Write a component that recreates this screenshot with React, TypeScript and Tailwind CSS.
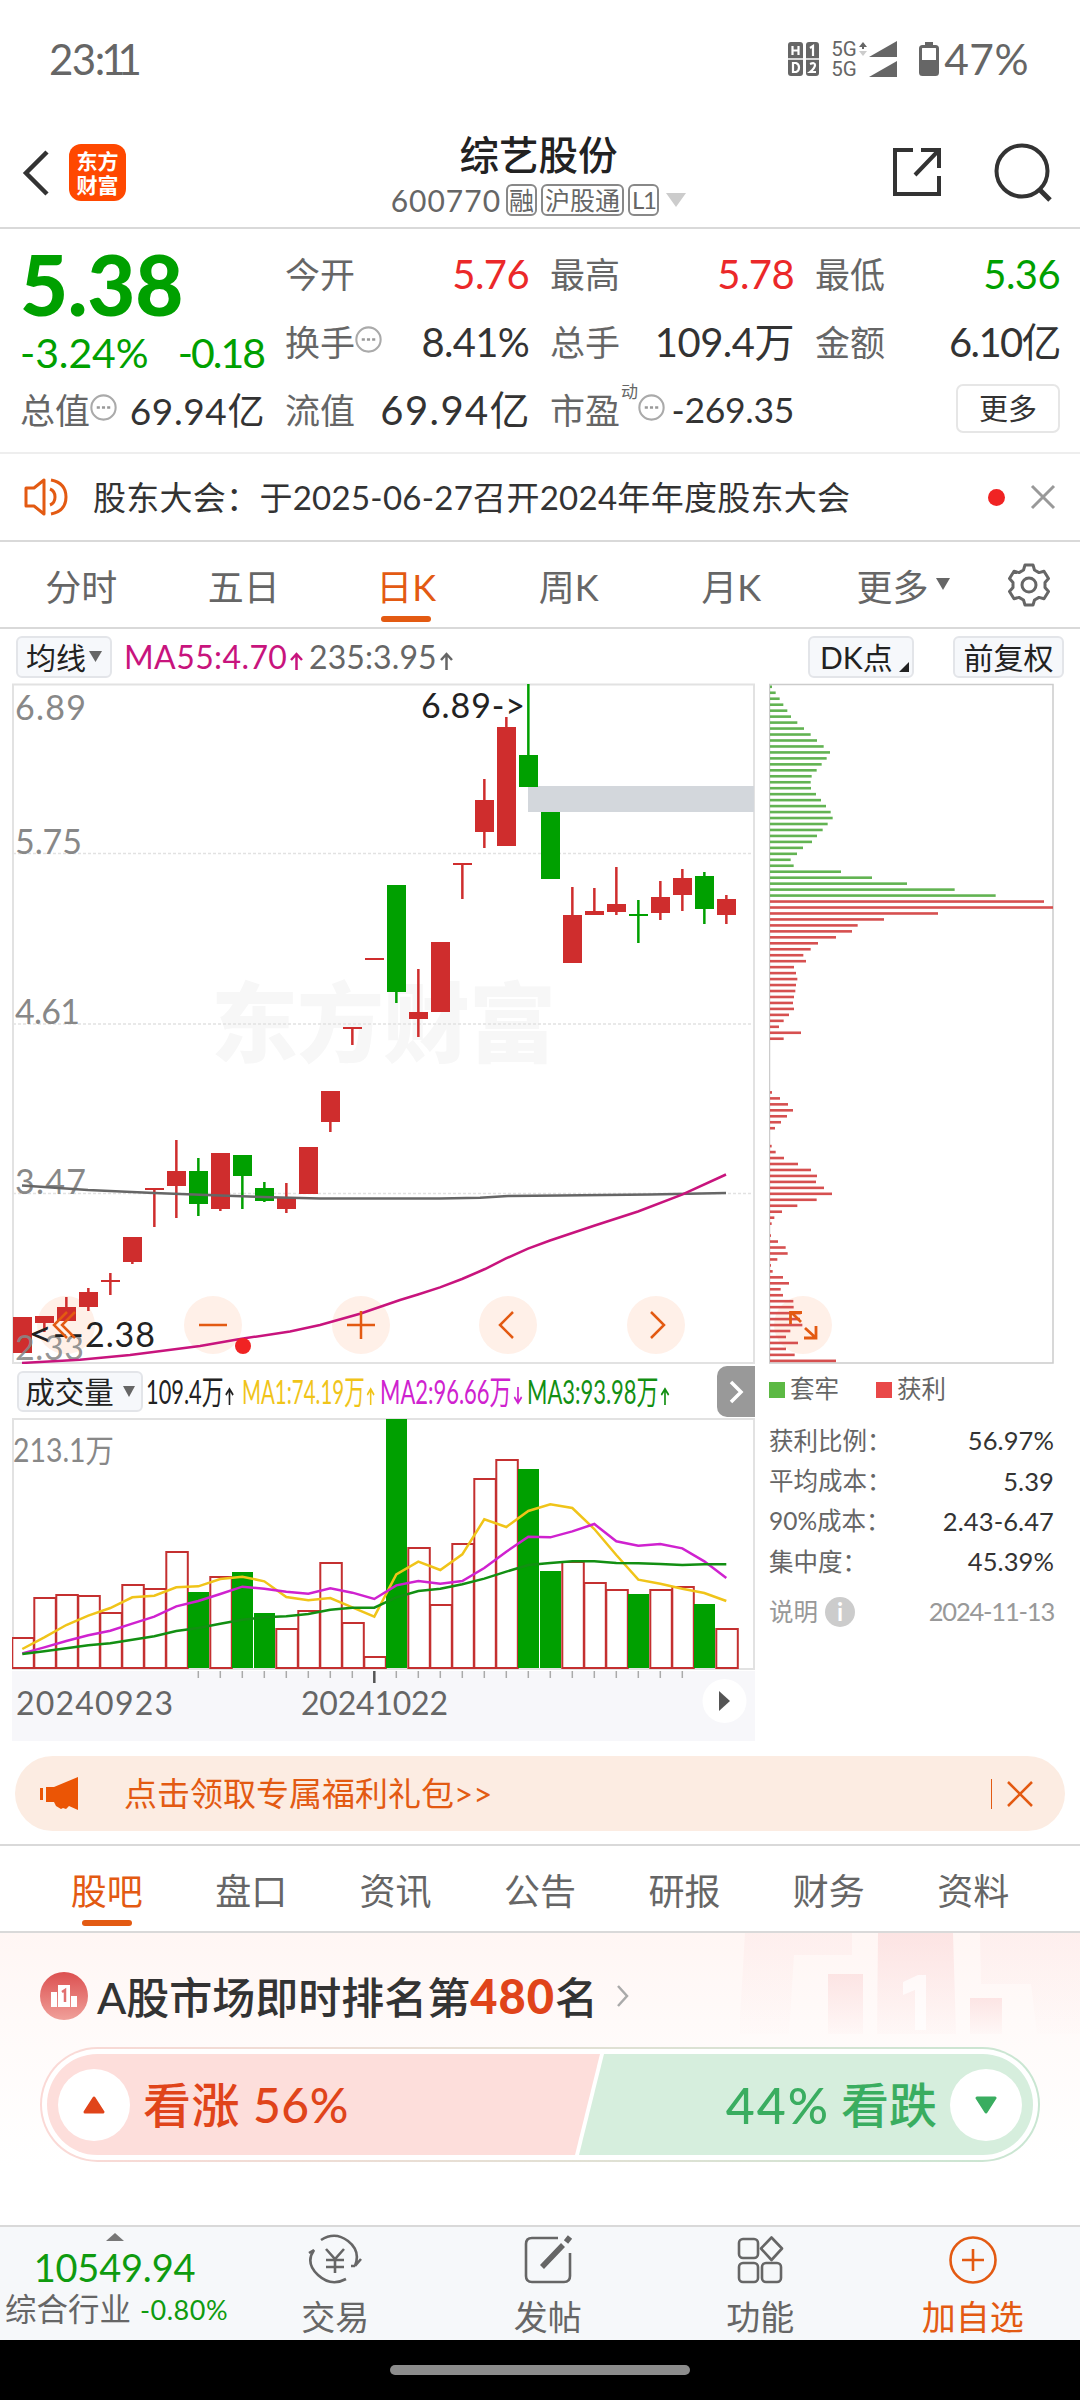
import clsx from "clsx";

type TCandle = {
  up: boolean
  high: number
  top: number
  bottom: number
  low: number
}

const c = (up: number, high: number, top: number, bottom: number, low: number): TCandle => ({
  up: up === 1,
  high,
  top,
  bottom,
  low,
});

const candles: TCandle[] = [
  c(1, 1317, 1317, 1353, 1353),
  c(1, 1316, 1316, 1323, 1332),
  c(1, 1297, 1307, 1321, 1321),
  c(1, 1288, 1292, 1307, 1311),
  c(1, 1273, 1280, 1282, 1295),
  c(1, 1237, 1237, 1262, 1264),
  c(1, 1188, 1188, 1190, 1227),
  c(1, 1140, 1171, 1186, 1218),
  c(0, 1158, 1171, 1204, 1216),
  c(1, 1153, 1153, 1209, 1211),
  c(0, 1155, 1155, 1176, 1209),
  c(0, 1182, 1188, 1201, 1202),
  c(1, 1183, 1198, 1209, 1213),
  c(1, 1147, 1147, 1194, 1194),
  c(1, 1091, 1091, 1122, 1132),
  c(1, 1027, 1027, 1029, 1045),
  c(1, 958, 958, 960, 960),
  c(0, 885, 885, 992, 1003),
  c(1, 969, 1012, 1019, 1037),
  c(1, 942, 942, 1012, 1012),
  c(1, 863, 863, 865, 899),
  c(1, 779, 800, 832, 848),
  c(1, 717, 727, 846, 846),
  c(0, 684, 755, 787, 787),
  c(0, 812, 812, 879, 879),
  c(1, 887, 915, 963, 963),
  c(1, 888, 911, 915, 915),
  c(1, 867, 904, 912, 915),
  c(0, 900, 914, 916, 943),
  c(1, 881, 897, 913, 920),
  c(1, 869, 878, 895, 911),
  c(0, 872, 876, 909, 924),
  c(1, 895, 899, 915, 924),
];

const volumes = [
  30, 70, 73, 72, 55, 83, 79, 116, 76, 91, 96, 55, 39, 57, 105, 45, 11, 249, 120, 63, 124, 189,
  208, 199, 97, 106, 85, 78, 74, 78, 81, 64, 39,
];

// distance from the bottom of the volume pane, in thirds of a pixel
const volumeLines = [
  {
    color: "#f0c419",
    points: [
      57, 92, 129, 157, 180, 212, 217, 242, 245, 267, 274, 260, 213, 203, 210, 182, 154, 281, 319,
      294, 341, 446, 423, 471, 491, 480, 417, 339, 265, 253, 238, 225, 201,
    ],
  },
  {
    color: "#cf22cf",
    points: [
      44, 62, 81, 98, 112, 133, 154, 185, 201, 222, 244, 238, 229, 223, 239, 226, 207, 248, 261,
      253, 261, 300, 349, 394, 392, 410, 432, 380, 367, 372, 359, 320, 270,
    ],
  },
  {
    color: "#128f12",
    points: [
      42, 50, 59, 68, 74, 85, 95, 111, 120, 133, 145, 152, 155, 162, 175, 181, 181, 212, 231, 238,
      251, 268, 289, 309, 315, 320, 320, 315, 314, 312, 309, 311, 311,
    ],
  },
];

// cost distribution, one entry per price row; the first 36 rows are above the last price
const chips = [
  6, 17, 29, 40, 52, 63, 82, 102, 122, 141, 161, 180, 170, 155, 140, 125, 122, 123, 138, 153, 168,
  182, 188, 173, 158, 141, 126, 99, 81, 62, 71, 213, 306, 411, 554, 677, 822, 849, 504, 342, 263,
  246, 198, 144, 122, 100, 108, 72, 78, 82, 78, 76, 72, 69, 72, 57, 41, 27, 93, 41, 0, 0, 0, 0, 0,
  0, 0, 0, 6, 30, 54, 69, 51, 33, 15, 0, 0, 5, 17, 42, 84, 123, 141, 138, 162, 186, 140, 82, 36,
  13, 5, 0, 3, 24, 47, 53, 22, 3, 8, 39, 57, 32, 39, 70, 71, 92, 90, 97, 61, 48, 84, 48, 74, 198,
];

const cx = (i: number) => 22.3 + i * 22;

function StatusBar() {
  return (
    <div className="flex h-[118px] items-center justify-between pl-[49px] pr-[51px] text-[#666]">
      <span className="text-[42px] leading-none tracking-[-1.5px]">
        23<span className="tracking-[-4px]">:</span>
        <span className="tracking-[-8px]">11</span>
      </span>
      <div className="flex items-center">
        <svg width="32" height="36" viewBox="0 0 32 36">
          <rect x="0" y="1" width="15" height="34" rx="3" fill="#666" />
          <rect x="18" y="1" width="13" height="34" rx="3" fill="#666" />
          <path d="M4.500 5v9M10.500 5v9M4.500 9.500h6M5 22v9h3q3-1 3-4.500t-3-4.500z" stroke="#fff" strokeWidth="2.200" fill="none" />
          <path d="M22 7l3-2v10M22 23q5-2 5 1t-5 7h6" stroke="#fff" strokeWidth="2.200" fill="none" />
          <path d="M0 18h32" stroke="#fff" strokeWidth="1.500" />
        </svg>
        <div className="ml-[11px] flex w-[27px] flex-col gap-[2px] font-['Roboto',sans-serif] text-[20.500px] leading-[18px]">
          <span>5G</span>
          <span>5G</span>
        </div>
        <svg className="ml-px" width="40" height="38" viewBox="0 0 40 38">
          <path d="M4 2l4 5H0zM3 6h2v3H3z" fill="#666" />
          <path d="M4 16l4-5H0z" fill="#ccc" />
          <path d="M38 1v16H10zM38 21v16H10z" fill="#666" />
        </svg>
        <svg className="ml-[20px]" width="20" height="34" viewBox="0 0 20 34">
          <path d="M6 0h8v4H6z" fill="#666" />
          <rect x="1.500" y="4.500" width="17" height="28" rx="2" fill="none" stroke="#666" strokeWidth="3" />
          <path d="M2 18h16v14H2z" fill="#666" />
        </svg>
        <span className="ml-[5px] text-[42.500px] leading-none tracking-[0.5px]">47%</span>
      </div>
    </div>
  );
}

function Header() {
  return (
    <div className="flex h-[111px] items-center justify-between border-b-2 border-[#d9d9d9] pl-[21px] pr-[27px]">
      <div className="flex w-[320px] items-center">
        <svg width="30" height="48" viewBox="0 0 30 48" fill="none" stroke="#333" strokeWidth="4.500">
          <path d="M26 3L5 24l21 21" />
        </svg>
        <div className="ml-[18px] flex h-[57px] w-[57px] flex-col items-center justify-center rounded-[12px] bg-[#ff4800] text-[21px] font-bold leading-[24px] text-white">
          <span>东方</span>
          <span>财富</span>
        </div>
      </div>
      <div className="ml-[3px] flex flex-col items-center">
        <div className="text-[39.5px] font-medium leading-[52px] text-[#222]">综艺股份</div>
        <div className="mt-[3px] flex h-[33px] items-center gap-[4px] text-[25px] leading-none text-[#666]">
          <span className="mr-px text-[30px] tracking-[1px]">600770</span>
          <span className="flex h-[32px] items-center rounded-[6px] border-2 border-[#888] px-px">融</span>
          <span className="flex h-[32px] items-center rounded-[6px] border-2 border-[#888] px-[2px]">沪股通</span>
          <span className="flex h-[32px] items-center rounded-[6px] border-2 border-[#888] px-[2px] text-[24px] tracking-[-1.5px]">L1</span>
          <svg className="ml-[3px]" width="20" height="14" viewBox="0 0 20 14">
            <path d="M0 0h20L10 14z" fill="#ccc" />
          </svg>
        </div>
      </div>
      <div className="flex w-[320px] items-center justify-end gap-[51px]">
        <svg className="mb-[2px]" width="50" height="50" viewBox="0 0 50 50" fill="none" stroke="#333" strokeWidth="4" >
          <path d="M21 3H3v44h44V29M29 3h18v18M47 3L23 28" />
        </svg>
        <svg className="mb-[2px]" width="60" height="60" viewBox="0 0 60 60" fill="none" stroke="#333" strokeWidth="4">
          <circle cx="29" cy="29" r="25.500" />
          <path d="M46 47l11 11" strokeWidth="5" />
        </svg>
      </div>
    </div>
  );
}

function Dots() {
  return (
    <svg className="mb-[5px] shrink-0" width="27" height="27" viewBox="0 0 26 26">
      <circle cx="13" cy="13" r="11.700" fill="none" stroke="#aaa" strokeWidth="2" />
      <path d="M6.500 11.800h3v2.400h-3zM11.500 11.800h3v2.400h-3zM16.500 11.800h3v2.400h-3z" fill="#999" />
    </svg>
  );
}

type TField = {
  label: string
  value: string
  color?: string
  dots?: boolean
  size?: string
}

function Field({ label, value, color = "text-[#333]", dots, size = "text-[40px] tracking-[-0.7px]" }: TField) {
  return (
    <div className="flex h-[68px] items-center justify-between">
      <div className="flex items-center text-[35px] text-[#666]">
        {label}
        {dots && <Dots />}
      </div>
      <span className={clsx("whitespace-nowrap", size, color)}>{value}</span>
    </div>
  );
}

function Quote() {
  return (
    <div className="flex h-[225px] border-b-2 border-[#eee] pl-[20px] pr-[20px] pt-[11px] leading-none">
      <div className="w-[244px]">
        <div className="flex h-[89px] items-center text-[83px] font-black tracking-[-0.3px] text-[#00a000]">
          5.38
        </div>
        <div className="flex h-[47px] items-center justify-between text-[41px] tracking-[-0.1px] text-[#00a000]">
          <span>-3.24%</span>
          <span className="tracking-[-2px]">-0.18</span>
        </div>
        <Field label="总值" value="69.94亿" dots size="text-[37px] tracking-[0.6px] -mr-px" />
      </div>
      <div className="ml-[21px] w-[244px]">
        <Field label="今开" value="5.76" color="text-[#eb2829]" size="text-[40px] tracking-[-0.6px]" />
        <Field label="换手" value="8.41%" dots />
        <Field label="流值" value="69.94亿" size="text-[40px] tracking-[1.4px] -mr-[2px]" />
      </div>
      <div className="ml-[21px] w-[244px]">
        <Field label="最高" value="5.78" color="text-[#eb2829]" size="text-[40px] tracking-[-0.6px]" />
        <Field label="总手" value="109.4万" size="text-[40px] tracking-[-0.5px]" />
        <div className="flex h-[68px] items-center justify-between">
          <div className="flex items-center text-[35px] text-[#666]">
            市盈
            <span className="mb-[38px] ml-px text-[17px]">动</span>
            <Dots />
          </div>
          <span className="text-[35.5px] tracking-[-0.3px] text-[#333]">-269.35</span>
        </div>
      </div>
      <div className="ml-[21px] w-[245px]">
        <Field label="最低" value="5.36" color="text-[#00a000]" size="text-[40px] tracking-[-0.6px]" />
        <Field label="金额" value="6.10亿" size="text-[40px] tracking-[-1.6px]" />
        <div className="flex h-[68px] items-center justify-end">
          <span className="mb-[3px] flex h-[49px] w-[104px] items-center justify-center rounded-[7px] border-2 border-[#e6e6e6] text-[29px] text-[#333]">
            更多
          </span>
        </div>
      </div>
    </div>
  );
}

function Notice() {
  return (
    <div className="flex h-[88px] items-center border-b-2 border-[#d9d9d9] pl-[24px] pr-[24px]">
      <svg width="46" height="40" viewBox="0 0 46 40" fill="none" stroke="#e35a12" strokeWidth="3">
        <path d="M2 11h8L20 3v34L10 29H2z" strokeLinejoin="round" />
        <path d="M26 12q5 2 5 8t-5 8M27 3q15 3 15 17T27 37" />
      </svg>
      <span className="ml-[23px] whitespace-nowrap text-[33px] leading-none tracking-[0.280px] text-[#333]">
        股东大会：于2025-06-27召开2024年年度股东大会
      </span>
      <span className="ml-auto h-[17px] w-[17px] rounded-full bg-[#f02323]" />
      <svg className="ml-[25px]" width="26" height="26" viewBox="0 0 26 26" stroke="#999" strokeWidth="3">
        <path d="M2 2l22 22M24 2L2 24" />
      </svg>
    </div>
  );
}

function PeriodTabs() {
  const tabs = ["分时", "五日", "日K", "周K", "月K"];
  return (
    <div className="flex h-[87px] border-b-2 border-[#d9d9d9] text-[36px] leading-none text-[#666]">
      {tabs.map((tab) => (
        <div
          key={tab}
          className={clsx("flex w-[162.500px] flex-col items-center pt-[27px]", tab === "日K" && "text-[#e35a12]")}
        >
          {tab}
          {tab === "日K" && <span className="mt-[11px] h-[6px] w-[50px] rounded-full bg-[#e35a12]" />}
        </div>
      ))}
      <div className="flex w-[181px] items-start justify-center gap-[7px] pt-[27px]">
        更多
        <svg className="mt-[9px]" width="14" height="12" viewBox="0 0 14 12">
          <path d="M0 0h14L7 12z" fill="#666" />
        </svg>
      </div>
      <svg className="ml-[13px] mt-[21px]" width="44" height="44" viewBox="0 0 44 44" fill="none" stroke="#666" strokeWidth="3">
        <path
          d="M18 2h8l1.500 5 4.500 2.600 5-1.400 4.500 7.300-3.500 4v5l3.500 4-4.500 7.300-5-1.400-4.500 2.600L26 42h-8l-1.500-5-4.500-2.600-5 1.400-4.500-7.300 3.500-4v-5l-3.500-4L7 8.200l5 1.400L16.500 7z"
          strokeLinejoin="round"
        />
        <circle cx="22" cy="22" r="7" />
      </svg>
    </div>
  );
}

function AverageBar() {
  return (
    <div className="flex h-[54px] items-center pl-[16px] pr-[16px] pt-px text-[30px] leading-none">
      <span className="flex h-[42px] w-[96px] items-center justify-center gap-[3px] rounded-[6px] border-2 border-[#e3e5e9] bg-[#f6f8fb] text-[#222]">
        均线
        <svg width="13" height="11" viewBox="0 0 13 11">
          <path d="M0 0h13L6.500 11z" fill="#666" />
        </svg>
      </span>
      <span className="ml-[12px] w-[185px] whitespace-nowrap text-[32px] tracking-[0.4px] text-[#c8147d]">
        MA55:4.70<Arrow up />
      </span>
      <span className="whitespace-nowrap text-[32px] tracking-[0.1px] text-[#666]">
        235:3.95<Arrow up />
      </span>
      <span className="relative ml-auto flex h-[42px] w-[106px] items-center rounded-[6px] border-2 border-[#e3e5e9] bg-[#f6f8fb] pl-[10px] text-[#222]">
        DK点
        <svg className="absolute bottom-[4px] right-[3px]" width="10" height="10" viewBox="0 0 10 10">
          <path d="M10 0v10H0z" fill="#222" />
        </svg>
      </span>
      <span className="ml-[39px] flex h-[42px] w-[111px] items-center justify-center rounded-[6px] border-2 border-[#e3e5e9] bg-[#f6f8fb] text-[#222]">
        前复权
      </span>
    </div>
  );
}

function Arrow({ up }: { up?: boolean }) {
  return (
    <svg className="ml-[2px] inline-block align-[-1px]" width="15" height="18" viewBox="0 0 15 18" fill="none" stroke="currentColor" strokeWidth="2.500">
      <path d={up ? "M7.500 18V2M2 8l5.500-6L13 8" : "M7.500 0v16M2 10l5.500 6 5.500-6"} />
    </svg>
  );
}

function CandleChart() {
  return (
    <svg className="block" width="743" height="681" viewBox="12 683 743 681" fontSize="34">
      <text x="211" y="1056" fontSize="87" fontWeight="900" textLength="345" fill="#f7f7f7">
        东方财富
      </text>
      {[853.5, 1024, 1193.5].map((y) => (
        <path key={y} d={`M13 ${y}H754`} stroke="#e2e2e2" strokeWidth="1.500" strokeDasharray="3 2" />
      ))}
      <rect x="13" y="684.500" width="741" height="678.500" fill="none" stroke="#e2e2e2" strokeWidth="2" />
      <g fill="#fff0e8">
        {[66, 213, 361, 508, 656].map((x) => (
          <circle key={x} cx={x} cy="1325" r="29" />
        ))}
      </g>
      <g fill="#888">
        <text x="15" y="719.500" textLength="71">6.89</text>
        <text x="15" y="853.500" textLength="67">5.75</text>
        <text x="15" y="1023.500" textLength="65">4.61</text>
        <text x="15" y="1193.500" textLength="71">3.47</text>
      </g>
      <rect x="528" y="786" width="226" height="26" fill="#d3d7dc" />
      {candles.map((k, i) => (
        <g key={i} fill={k.up ? "#cf2d2d" : "#00a000"}>
          <rect x={cx(i) - 1.2} y={k.high} width="2.500" height={k.low - k.high} />
          <rect x={cx(i) - 9.3} y={k.top} width="19" height={k.bottom - k.top} />
        </g>
      ))}
      <text x="15" y="1360" fill="#888" fillOpacity="0.9" textLength="69">2.33</text>
      <g fill="none" strokeWidth="2.500">
        <path
          d="M22 1185.500L88 1190L154 1193L220 1195.500L280 1197.500L320 1198.600H440L480 1197.700L508 1196L560 1195.400L650 1194.600L726 1193"
          stroke="#666"
        />
        <path
          d="M22 1363L80 1359.700L130 1355L200 1346L240 1339L290 1331.500L320 1325L360 1313.800L400 1300L418 1294.500L440 1287.400L462 1279L485 1269L506 1258.400L528 1248.600L550 1240.500L594 1225.800L638 1211.500L682 1194.600L726 1174.500"
          stroke="#c8147d"
        />
      </g>
      <g fill="#222">
        <text x="421" y="717.500" textLength="104">6.89-&gt;</text>
        <text x="28" y="1346" textLength="56" lengthAdjust="spacingAndGlyphs">&lt;--</text>
        <text x="85" y="1346.500" textLength="70">2.38</text>
      </g>
      <circle cx="243" cy="1346" r="8" fill="#f02323" />
      <g fill="none" stroke="#e35a12" strokeWidth="2.500">
        <path d="M67 1312l-13 13 13 13M75 1312l-13 13 13 13" />
        <path d="M199 1325h28M347 1325h28M361 1311v28" />
        <path d="M513 1312l-13 13 13 13M651 1312l13 13-13 13" />
      </g>
    </svg>
  );
}

function VolumeBar() {
  return (
    <div className="flex h-[54px] items-center pl-[5px] pt-px text-[28px] leading-none">
      <span className="flex h-[41px] w-[126px] shrink-0 items-center justify-center gap-[9px] rounded-[6px] border-2 border-[#e3e5e9] bg-[#f6f8fb] text-[29.500px] text-[#222]">
        成交量
        <svg width="12" height="11" viewBox="0 0 12 11">
          <path d="M0 0h12L6 11z" fill="#666" />
        </svg>
      </span>
      <div className="ml-[3px] flex w-[570px] whitespace-nowrap text-[33px]">
        <div className="w-[96px]">
          <div className="origin-left scale-x-[0.660] text-[#222]">109.4万<Arrow up /></div>
        </div>
        <div className="w-[138px]">
          <div className="origin-left scale-x-[0.620] text-[#f0c419]">MA1:74.19万<Arrow up /></div>
        </div>
        <div className="w-[147px]">
          <div className="origin-left scale-x-[0.665] text-[#cf22cf]">MA2:96.66万<Arrow /></div>
        </div>
        <div className="w-[150px]">
          <div className="origin-left scale-x-[0.665] text-[#128f12]">MA3:93.98万<Arrow up /></div>
        </div>
      </div>
      <span className="ml-auto flex h-[51px] w-[38px] shrink-0 items-center justify-center rounded-l-[10px] bg-[#999]">
        <svg width="16" height="24" viewBox="0 0 16 24" fill="none" stroke="#fff" strokeWidth="3.500">
          <path d="M3 2l10 10L3 22" />
        </svg>
      </span>
    </div>
  );
}

function VolumeChart() {
  return (
    <svg className="block" width="743" height="323" viewBox="12 1418 743 323">
      <rect x="12" y="1671" width="743" height="70" fill="#f7f7fa" />
      <rect x="13" y="1419" width="741" height="250" fill="none" stroke="#e2e2e2" strokeWidth="2" />
      <text x="13" y="1462" fontSize="32" fill="#888" textLength="101" lengthAdjust="spacingAndGlyphs">213.1万</text>
      {volumes.map((v, i) =>
        candles[i].up ? (
          <rect key={i} x={cx(i) - 10} y={1668 - v} width="21.500" height={v} fill="#fff" stroke="#c43030" strokeWidth="2" />
        ) : (
          <rect key={i} x={cx(i) - 10.3} y={1668 - v} width="21" height={v} fill="#00a000" />
        ),
      )}
      {volumeLines.map((line) => (
        <polyline
          key={line.color}
          points={line.points.map((p, i) => `${cx(i)},${1668 - p / 3}`).join(" ")}
          fill="none"
          stroke={line.color}
          strokeWidth="2.500"
        />
      ))}
      {Array.from({ length: 23 }, (_, n) => n + 8).map((i) => (
        <path
          key={i}
          d={i === 16 ? `M${cx(i)} 1671v12` : `M${cx(i)} 1671v7`}
          stroke={i === 16 ? "#555" : "#aaa"}
          strokeWidth={i === 16 ? 2.5 : 1.5}
        />
      ))}
      <g fontSize="32" fill="#666">
        <text x="16" y="1715" textLength="157">20240923</text>
        <text x="301" y="1715" textLength="147">20241022</text>
      </g>
      <circle cx="724.500" cy="1701" r="22" fill="#fff" />
      <path d="M719 1691v20l11-10z" fill="#555" />
    </svg>
  );
}

function ChipPanel() {
  const rows = [
    ["获利比例：", "56.97%"],
    ["平均成本：", "5.39"],
    ["90%成本：", "2.43-6.47"],
    ["集中度：", "45.39%"],
  ];
  return (
    <div className="ml-[14px] w-[285px] text-[24.500px] leading-none">
      <svg className="block" width="285" height="681" viewBox="769 683 285 681">
        <path d="M769.500 684.500h283.500v678.500H769.500z" fill="none" stroke="#ccc" strokeWidth="1.500" />
        <circle cx="803" cy="1325" r="29" fill="#fff0e8" />
        {chips.map((w, i) => (
          <rect key={i} x="770" y={685.5 + i * 5.965} width={w / 3} height="2.600" fill={i < 36 ? "#62b352" : "#d65050"} />
        ))}
        <g fill="none" stroke="#e35a12" strokeWidth="2.800">
          <path d="M801 1322l-10-10M802 1312.500h-11.500V1324M805 1328l11 10M816 1326v12h-12" />
        </g>
      </svg>
      <div className="flex h-[50px] items-center pt-px text-[#666]">
        <span className="h-[16px] w-[16px] bg-[#5cb944]" />
        <span className="ml-[5px] w-[86px]">套牢</span>
        <span className="h-[16px] w-[16px] bg-[#e94848]" />
        <span className="ml-[5px]">获利</span>
      </div>
      <div className="mt-[7px]">
        {rows.map(([label, value]) => (
          <div key={label} className="flex h-[40.300px] items-center justify-between text-[#666]">
            <span>{label}</span>
            <span className="text-[25.500px] tracking-[0.1px] text-[#333]">{value}</span>
          </div>
        ))}
      </div>
      <div className="mt-[10px] flex h-[40px] items-center text-[#999]">
        <span>说明</span>
        <span className="ml-[7px] flex h-[30px] w-[30px] items-center justify-center rounded-full bg-[#ccc] text-[24px] font-bold text-white">i</span>
        <span className="ml-auto text-[25.500px] tracking-[-1.2px]">2024-11-13</span>
      </div>
    </div>
  );
}

function Banner() {
  return (
    <div className="mx-[15px] mt-[15px] flex h-[75px] items-center rounded-full bg-[#fcece2] pl-[25px] pr-[31px]">
      <svg width="40" height="36" viewBox="0 0 40 36" fill="#eb5505">
        <path d="M0 12h3v12H0zM6 11h8L38 1v33l-9-4-3 3-3-1-2 1-5-3-2-4H6z" />
      </svg>
      <span className="ml-[44px] text-[33px] leading-none text-[#e35a12]">点击领取专属福利礼包&gt;&gt;</span>
      <span className="ml-auto h-[30px] w-px bg-[#e35a12]" />
      <svg className="ml-[14px]" width="28" height="28" viewBox="0 0 28 28" stroke="#e35a12" strokeWidth="2.500">
        <path d="M2 2l24 24M26 2L2 26" />
      </svg>
    </div>
  );
}

function SectionTabs() {
  const tabs = ["股吧", "盘口", "资讯", "公告", "研报", "财务", "资料"];
  return (
    <div className="mt-[13px] flex h-[89px] border-y-2 border-[#d9d9d9] px-[34.500px] text-[36px] leading-none text-[#666]">
      {tabs.map((tab, i) => (
        <div key={tab} className={clsx("flex flex-1 flex-col items-center pt-[27px]", i === 0 && "text-[#e35a12]")}>
          {tab}
          {i === 0 && <span className="mt-[11px] h-[6px] w-[50px] rounded-full bg-[#e35a12]" />}
        </div>
      ))}
    </div>
  );
}

function Sentiment() {
  return (
    <div className="relative h-[292px] bg-linear-to-b from-[#fff6f4] via-[#fffaf9] via-30% to-white to-80% px-[40px] pt-[30px]">
      <svg className="absolute right-0 top-0" width="340" height="101" viewBox="740 1933 340 101">
        <defs>
          <linearGradient id="fade" x1="0" y1="0" x2="0" y2="1">
            <stop offset="0" stopColor="#fbdcdc" stopOpacity="0.700" />
            <stop offset="1" stopColor="#fbdcdc" stopOpacity="0.100" />
          </linearGradient>
        </defs>
        <g fill="url(#fade)">
          <path d="M745 1933h107v22h-58l-5 79h-50z" opacity="0.400" />
          <path d="M828 1974h35v60h-35z" />
          <path d="M878 1933h75l3 101h-79z" />
          <path d="M970 1998h32v36h-32z" />
          <path d="M980 1933h100v101h-43l-6-50h-50z" opacity="0.400" />
        </g>
        <path d="M903 1982l15-7h8v55h-11v-40l-12 5z" fill="#fff" fillOpacity="0.700" />
      </svg>
      <div className="flex h-[66px] items-center text-[43px] font-medium leading-none text-[#333]">
        <svg width="48" height="48" viewBox="0 0 48 48">
          <defs>
            <linearGradient id="rank" x1="0" y1="0" x2="0" y2="1">
              <stop offset="0" stopColor="#dc5050" />
              <stop offset="1" stopColor="#f0a09a" />
            </linearGradient>
          </defs>
          <circle cx="24" cy="24" r="24" fill="url(#rank)" />
          <path d="M11 20h6v15h-6zM18 13h12v22H18zM31 24h6v11h-6z" fill="#fff" />
          <path d="M22 20l3-2v12" stroke="#e27070" strokeWidth="2.500" fill="none" />
        </svg>
        <span className="ml-[9px] whitespace-nowrap">
          A股市场即时排名第<span className="text-[47px] font-black tracking-[1px] text-[#e0441a]">480</span>名
        </span>
        <svg className="ml-[17px]" width="16" height="24" viewBox="0 0 16 24" fill="none" stroke="#aaa" strokeWidth="2.500">
          <path d="M3 2l9 10-9 10" />
        </svg>
      </div>
      <div className="mt-[18px] h-[115px] rounded-full bg-linear-to-r from-[#fbd9d6] to-[#c9e6d2] p-[2px]">
        <div className="h-full rounded-full bg-white p-[5px]">
          <div className="relative flex h-full items-center justify-between overflow-hidden rounded-full text-[48px] font-medium leading-none">
            <svg className="absolute inset-0" width="986" height="101" viewBox="0 0 986 101">
              <path d="M0 0h553l-25 101H0z" fill="#fddedb" />
              <path d="M557 0h429v101H532z" fill="#d6eedd" />
            </svg>
            <div className="relative flex items-center text-[#e0441a]">
              <span className="ml-[11px] flex h-[72px] w-[72px] items-center justify-center rounded-full bg-white">
                <svg width="22" height="18" viewBox="0 0 22 18">
                  <path d="M11 2l9 14H2z" fill="#e0441a" stroke="#e0441a" strokeWidth="3" strokeLinejoin="round" />
                </svg>
              </span>
              <span className="ml-[13px] tracking-[0.600px]">看涨 56%</span>
            </div>
            <div className="relative flex items-center text-[#3aad60]">
              <span className="text-[50px] tracking-[2px]">44%</span>
              <span className="ml-[11px]">看跌</span>
              <span className="ml-[13px] mr-[11px] flex h-[72px] w-[72px] items-center justify-center rounded-full bg-white">
                <svg width="22" height="18" viewBox="0 0 22 18">
                  <path d="M11 16l9-14H2z" fill="#3aad60" stroke="#3aad60" strokeWidth="3" strokeLinejoin="round" />
                </svg>
              </span>
            </div>
          </div>
        </div>
      </div>
    </div>
  );
}

function BottomNav() {
  return (
    <div className="flex h-[115px] border-t-2 border-[#d9d9d9] bg-[#f6f8fa] text-[34px] leading-none text-[#666]">
      <div className="flex w-[229px] flex-col items-center pt-[6px]">
        <svg width="18" height="8" viewBox="0 0 18 8">
          <path d="M0 8h18L9 0z" fill="#777" />
        </svg>
        <span className="mt-[7px] text-[38px] tracking-[-0.2px] text-[#0f9b0f]">10549.94</span>
        <div className="mt-[8px] flex w-full items-center whitespace-nowrap pl-[5px]">
          <span className="text-[31.500px]">综合行业</span>
          <span className="ml-[9px] text-[27px] tracking-[0.5px] text-[#0f9b0f]">-0.80%</span>
        </div>
      </div>
      <NavItem label="交易">
        <path d="M14 7Q28-2 41 8t7 25M39 46Q24 54 11 42T7 17L2 20M48 33l6-7M48 33h-4" />
        <path d="M19 16l9 10 9-10M28 26v14M19 27h18M19 34h18" />
      </NavItem>
      <NavItem label="发帖">
        <path d="M38 5H12Q6 5 6 11v32q0 6 6 6h32q6 0 6-6V20" />
        <path d="M22 34L43 12M46 9l4-5" strokeWidth="5.500" />
      </NavItem>
      <NavItem label="功能">
        <rect x="7" y="6" width="19" height="19" rx="4" />
        <rect x="7" y="30" width="19" height="19" rx="4" />
        <rect x="30" y="30" width="19" height="19" rx="4" />
        <path d="M39.500 4.500L50 15.500 39.500 27 29 15.500z" strokeLinejoin="round" />
      </NavItem>
      <NavItem label="加自选" active>
        <circle cx="28" cy="27" r="22.500" />
        <path d="M28 16v22M17 27h22" />
      </NavItem>
    </div>
  );
}

type TNavItem = {
  label: string
  active?: boolean
  children: React.ReactNode
}

function NavItem({ label, active, children }: TNavItem) {
  return (
    <div className={clsx("flex w-[212.500px] flex-col items-center pt-[6px]", active && "text-[#e35a12]")}>
      <svg width="56" height="54" viewBox="0 0 56 54" fill="none" stroke="currentColor" strokeWidth="2.600">
        {children}
      </svg>
      <span className="mt-[13px]">{label}</span>
    </div>
  );
}

function App() {
  return (
    <div className="h-[2400px] w-[1080px] overflow-hidden bg-white font-['Lato','Noto_Sans_CJK_SC',sans-serif]">
      <StatusBar />
      <Header />
      <Quote />
      <Notice />
      <PeriodTabs />
      <AverageBar />
      <div className="flex pl-[12px]">
        <div className="w-[743px]">
          <CandleChart />
          <VolumeBar />
          <VolumeChart />
        </div>
        <ChipPanel />
      </div>
      <Banner />
      <SectionTabs />
      <Sentiment />
      <BottomNav />
      <div className="flex h-[60px] justify-center bg-black pt-[25px]">
        <div className="h-[10px] w-[300px] rounded-full bg-[#8c8c8c]" />
      </div>
    </div>
  );
}

export default App;
